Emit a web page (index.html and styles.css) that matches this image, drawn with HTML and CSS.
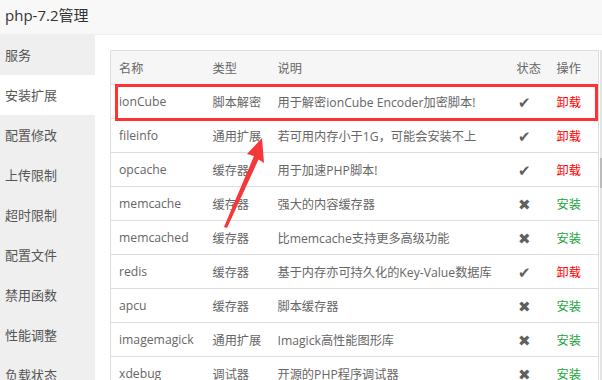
FILE: index.html
```html
<!DOCTYPE html>
<html>
<head>
<meta charset="utf-8">
<link rel="stylesheet" href="styles.css">
</head>
<body>
<div class="title">php-7.2管理</div>
<div class="main">
  <div class="side">
    <div class="item">服务</div>
    <div class="item active">安装扩展</div>
    <div class="item">配置修改</div>
    <div class="item">上传限制</div>
    <div class="item">超时限制</div>
    <div class="item">配置文件</div>
    <div class="item">禁用函数</div>
    <div class="item">性能调整</div>
    <div class="item">负载状态</div>
  </div>
  <div class="content">
    <div class="tablewrap">
      <table class="tbl">
        <colgroup><col class="c1"><col class="c2"><col class="c3"><col class="c4"><col class="c5"></colgroup>
        <thead><tr><th>名称</th><th>类型</th><th>说明</th><th>状态</th><th>操作</th></tr></thead>
        <tbody>
          <tr><td>ionCube</td><td>脚本解密</td><td>用于解密ionCube Encoder加密脚本!</td><td class="st">✔</td><td class="un">卸载</td></tr>
          <tr><td>fileinfo</td><td>通用扩展</td><td>若可用内存小于1G，可能会安装不上</td><td class="st">✔</td><td class="un">卸载</td></tr>
          <tr><td>opcache</td><td>缓存器</td><td>用于加速PHP脚本!</td><td class="st">✔</td><td class="un">卸载</td></tr>
          <tr><td>memcache</td><td>缓存器</td><td>强大的内容缓存器</td><td class="st">✖</td><td class="in">安装</td></tr>
          <tr><td>memcached</td><td>缓存器</td><td>比memcache支持更多高级功能</td><td class="st">✖</td><td class="in">安装</td></tr>
          <tr><td>redis</td><td>缓存器</td><td>基于内存亦可持久化的Key-Value数据库</td><td class="st">✔</td><td class="un">卸载</td></tr>
          <tr><td>apcu</td><td>缓存器</td><td>脚本缓存器</td><td class="st">✖</td><td class="in">安装</td></tr>
          <tr><td>imagemagick</td><td>通用扩展</td><td>Imagick高性能图形库</td><td class="st">✖</td><td class="in">安装</td></tr>
          <tr><td>xdebug</td><td>调试器</td><td>开源的PHP程序调试器</td><td class="st">✖</td><td class="in">安装</td></tr>
        </tbody>
      </table>
      <div class="scrollbar"><div class="thumb"></div></div>
    </div>
  </div>
</div>
<div class="highlight"></div>
<svg class="arrow" width="60" height="110" viewBox="0 0 60 110">
  <polygon points="42,2 44,27 38.5,23.5 7,92 4,91 34,20 27,18" fill="#f5373a"/>
</svg>
</body>
</html>
```
FILE: styles.css
```css
html, body {
  margin: 0;
  padding: 0;
  width: 602px;
  height: 380px;
  overflow: hidden;
  background: #fff;
  font-family: "Open Sans", "Noto Sans CJK SC", sans-serif;
  color: #666;
}
.title {
  height: 34px;
  line-height: 30px;
  padding-left: 5px;
  font-size: 15px;
  color: #333;
  background: #f8f8f8;
  border-bottom: 1px solid #eee;
}
.main {
  display: flex;
  height: 345px;
}
.side {
  width: 95px;
  flex: none;
  background: #efefef;
}
.item {
  height: 40px;
  line-height: 40px;
  padding-left: 5px;
  font-size: 13px;
  color: #555;
}
.item.active {
  background: #fff;
}
.content {
  flex: 1;
  padding: 15px 0 0 15px;
  min-width: 0;
}
.tablewrap {
  display: flex;
  align-items: flex-start;
}
.tbl {
  width: 489px;
  flex: none;
  border-collapse: collapse;
  table-layout: fixed;
  font-size: 12.2px;
  border: 1px solid #ddd;
}
.c1 { width: 94px; }
.c2 { width: 65px; }
.c3 { width: 239px; }
.c4 { width: 40px; }
.c5 { width: 50px; }
.tbl th, .tbl td {
  height: 33px;
  padding: 0 0 0 8px;
  text-align: left;
  font-weight: normal;
  color: #666;
  border-bottom: 1px solid #ddd;
  white-space: nowrap;
  overflow: hidden;
}
.tbl th {
  background: #f6f6f6;
}
.tbl td.st {
  font-size: 15px;
  color: #5f5f5f;
  padding-left: 9px;
}
.tbl td.un { color: #f00; }
.tbl td.in { color: #20a53a; }
.scrollbar {
  width: 3px;
  height: 340px;
  margin-left: 1px;
  background: #e4e4e4;
}
.thumb {
  height: 30px;
  margin-top: 108px;
  background: #bbb;
}
.highlight {
  position: absolute;
  left: 115px;
  top: 84px;
  width: 477px;
  height: 31px;
  border: 3px solid #f33;
}
.arrow {
  position: absolute;
  left: 220px;
  top: 136px;
}
```
